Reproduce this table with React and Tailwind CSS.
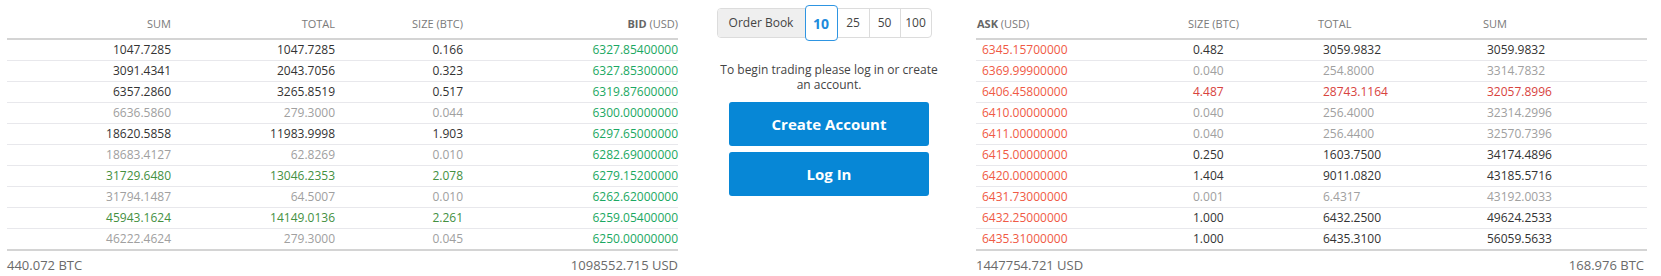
import React from "react";

const C = {
  d: "text-[#333333]",
  g: "text-[#a0a0a0]",
  gr: "text-[#44903f]",
  r: "text-[#d8433e]",
};

const bids = [
  ["1047.7285", "1047.7285", "0.166", "6327.85400000", "d"],
  ["3091.4341", "2043.7056", "0.323", "6327.85300000", "d"],
  ["6357.2860", "3265.8519", "0.517", "6319.87600000", "d"],
  ["6636.5860", "279.3000", "0.044", "6300.00000000", "g"],
  ["18620.5858", "11983.9998", "1.903", "6297.65000000", "d"],
  ["18683.4127", "62.8269", "0.010", "6282.69000000", "g"],
  ["31729.6480", "13046.2353", "2.078", "6279.15200000", "gr"],
  ["31794.1487", "64.5007", "0.010", "6262.62000000", "g"],
  ["45943.1624", "14149.0136", "2.261", "6259.05400000", "gr"],
  ["46222.4624", "279.3000", "0.045", "6250.00000000", "g"],
];

const asks = [
  ["6345.15700000", "0.482", "3059.9832", "3059.9832", "d"],
  ["6369.99900000", "0.040", "254.8000", "3314.7832", "g"],
  ["6406.45800000", "4.487", "28743.1164", "32057.8996", "r"],
  ["6410.00000000", "0.040", "256.4000", "32314.2996", "g"],
  ["6411.00000000", "0.040", "256.4400", "32570.7396", "g"],
  ["6415.00000000", "0.250", "1603.7500", "34174.4896", "d"],
  ["6420.00000000", "1.404", "9011.0820", "43185.5716", "d"],
  ["6431.73000000", "0.001", "6.4317", "43192.0033", "g"],
  ["6432.25000000", "1.000", "6432.2500", "49624.2533", "d"],
  ["6435.31000000", "1.000", "6435.3100", "56059.5633", "d"],
];

const leftCols = "grid grid-cols-[164px_164px_128px_215px]";
const rightCols = "grid grid-cols-[211px_130px_165px_165px]";

function LeftTable() {
  return (
    <div className="w-[671px] flex flex-col">
      <div className={`${leftCols} h-[40px] pt-[11px] border-b-2 border-[#d4d4d4] text-[11px] text-[#7a7a7a] items-center text-right`}>
        <div>SUM</div>
        <div>TOTAL</div>
        <div>SIZE (BTC)</div>
        <div>
          <span className="font-bold text-[#666]">BID</span> (USD)
        </div>
      </div>
      {bids.map((r, i) => (
        <div
          key={i}
          className={`${leftCols} ${i === 9 ? "h-[22px] border-b-2 border-[#d4d4d4]" : "h-[21px] border-b border-[#e8e8ec]"} items-center text-right text-[12px] leading-none`}
        >
          <div className={C[r[4]]}>{r[0]}</div>
          <div className={C[r[4]]}>{r[1]}</div>
          <div className={C[r[4]]}>{r[2]}</div>
          <div className="text-[#1ba862]">{r[3]}</div>
        </div>
      ))}
      <div className="mt-[7px] flex justify-between text-[13px] leading-[15px] text-[#6a6a6a]">
        <span>440.072 BTC</span>
        <span>1098552.715 USD</span>
      </div>
    </div>
  );
}

function RightTable() {
  return (
    <div className="w-[671px] flex flex-col">
      <div className={`${rightCols} h-[40px] pt-[11px] border-b-2 border-[#d4d4d4] text-[11px] text-[#7a7a7a] items-center text-left`}>
        <div className="pl-[1px]">
          <span className="font-bold text-[#666]">ASK</span> (USD)
        </div>
        <div className="pl-[1px]">SIZE (BTC)</div>
        <div className="pl-[1px]">TOTAL</div>
        <div className="pl-[1px]">SUM</div>
      </div>
      {asks.map((r, i) => (
        <div
          key={i}
          className={`${rightCols} ${i === 9 ? "h-[22px] border-b-2 border-[#d4d4d4]" : "h-[21px] border-b border-[#e8e8ec]"} items-center text-left text-[12px] leading-none`}
        >
          <div className="pl-[6px] text-[#f05a45]">{r[0]}</div>
          <div className={`pl-[6px] ${C[r[4]]}`}>{r[1]}</div>
          <div className={`pl-[6px] ${C[r[4]]}`}>{r[2]}</div>
          <div className={`pl-[5px] ${C[r[4]]}`}>{r[3]}</div>
        </div>
      ))}
      <div className="mt-[7px] flex justify-between text-[13px] leading-[15px] text-[#6a6a6a] pr-[3px]">
        <span>1447754.721 USD</span>
        <span>168.976 BTC</span>
      </div>
    </div>
  );
}

function Center() {
  return (
    <div className="w-[298px] flex flex-col items-center">
      <div className="mt-[8px] mr-[6px] flex items-center h-[30px] border border-[#dcdcdc] rounded-[4px] text-[12px] text-[#444]">
        <div className="w-[87px] h-full flex items-center justify-center bg-[#efefef] rounded-l-[3px]">
          Order Book
        </div>
        <div className="relative z-10 w-[33px] h-[36px] flex items-center justify-center bg-white border border-[#2e95e2] rounded-[4px] text-[14px] font-bold text-[#1e8bdc]">
          10
        </div>
        <div className="w-[31px] h-full flex items-center justify-center">25</div>
        <div className="w-[31px] h-full flex items-center justify-center border-l border-[#dcdcdc]">50</div>
        <div className="w-[31px] h-full flex items-center justify-center border-l border-[#dcdcdc]">100</div>
      </div>
      <p className="mt-[24px] pl-[4px] text-center text-[12px] leading-[15px] text-[#444] w-[230px]">
        To begin trading please log in or create an account.
      </p>
      <div className="pl-[4px] mt-[10px] flex flex-col gap-[6px]">
        <button className="w-[200px] h-[44px] rounded-[3px] bg-[#0787d6] text-white text-[15px] font-bold">
          Create Account
        </button>
        <button className="w-[200px] h-[44px] rounded-[3px] bg-[#0787d6] text-white text-[15px] font-bold">
          Log In
        </button>
      </div>
    </div>
  );
}

export default function App() {
  return (
    <div className="w-[1661px] h-[276px] bg-white flex pl-[7px] overflow-hidden" style={{ fontFamily: '"Open Sans", sans-serif' }}>
      <LeftTable />
      <Center />
      <RightTable />
    </div>
  );
}
